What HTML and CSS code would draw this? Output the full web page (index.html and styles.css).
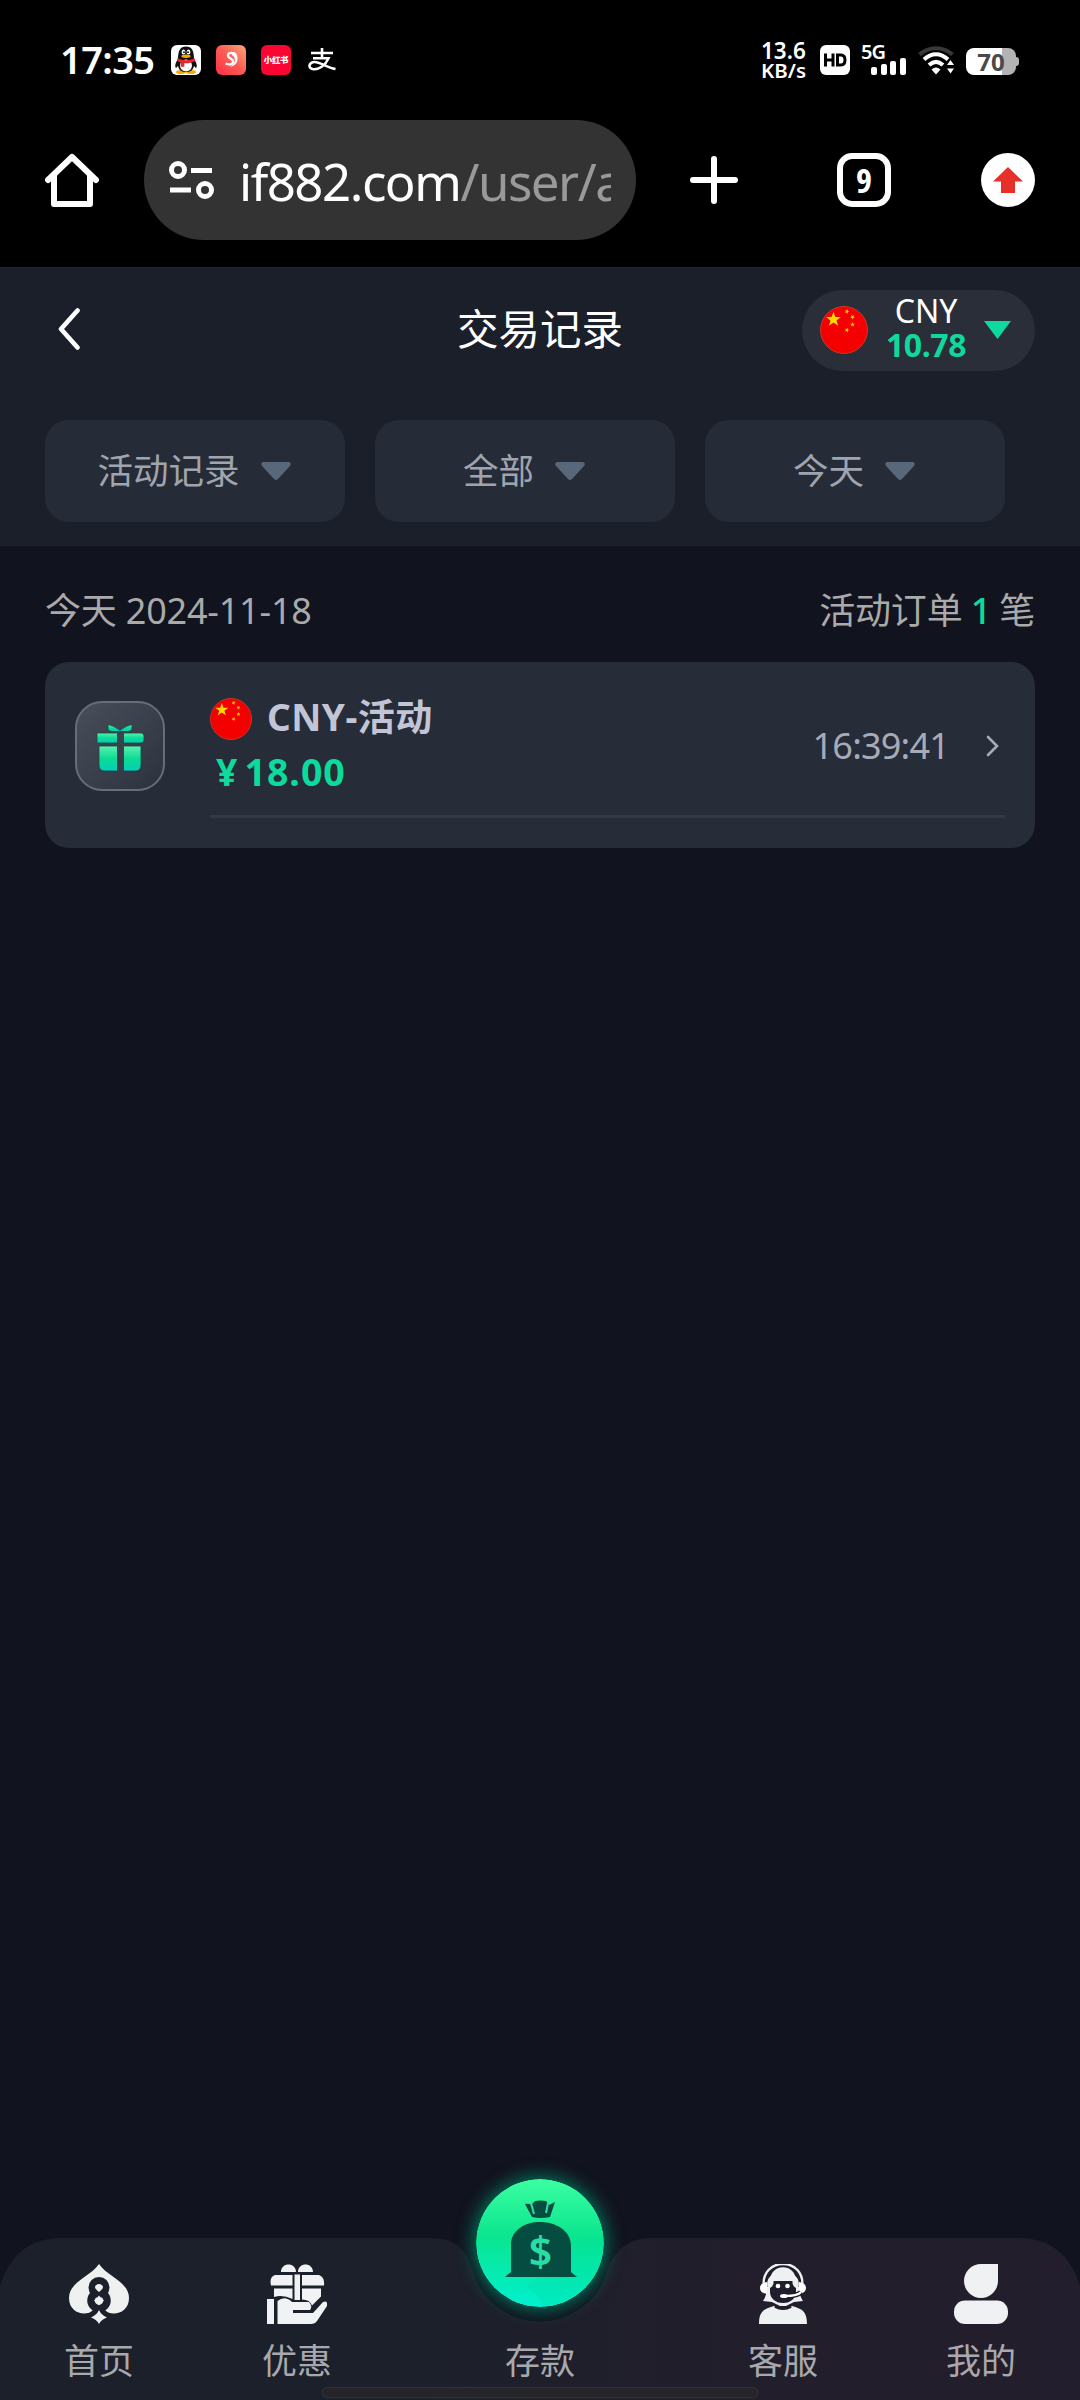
FILE: index.html
```html
<!DOCTYPE html>
<html lang="zh-CN">
<head>
<meta charset="utf-8">
<title>交易记录</title>
<link rel="stylesheet" href="styles.css">
</head>
<body>
<svg class="defs" width="0" height="0" aria-hidden="true">
  <defs>
    <linearGradient id="mint" x1="0" y1="0" x2="0" y2="1"><stop offset="0" stop-color="#3bffa0"/><stop offset=".45" stop-color="#0ae58f"/><stop offset="1" stop-color="#00f0d0"/></linearGradient>
    <linearGradient id="gift" x1="0" y1="0" x2="0" y2="1"><stop offset="0" stop-color="#5cf0b0"/><stop offset=".5" stop-color="#0bdc95"/><stop offset="1" stop-color="#04cdb8"/></linearGradient>
    <linearGradient id="tile" x1="0" y1="0" x2="1" y2="1"><stop offset="0" stop-color="#494e5b"/><stop offset="1" stop-color="#2b313d"/></linearGradient>
    <linearGradient id="coral" x1="0" y1="1" x2="1" y2="0"><stop offset="0" stop-color="#ff2f45"/><stop offset=".5" stop-color="#fb5a54"/><stop offset="1" stop-color="#ffa67a"/></linearGradient>
    <linearGradient id="bar" x1="0" y1="0" x2="1" y2="0"><stop offset="0" stop-color="#1b202a"/><stop offset=".4" stop-color="#1c202a"/><stop offset=".68" stop-color="#221e2c"/><stop offset="1" stop-color="#221e2d"/></linearGradient>
    <polygon id="star" points="0,-10 2.4,-3.2 9.5,-3.1 3.8,1.2 5.9,8.1 0,4 -5.9,8.1 -3.8,1.2 -9.5,-3.1 -2.4,-3.2"/>
    <symbol id="flag" viewBox="0 0 48 48">
      <circle cx="24" cy="24" r="23.5" fill="#f40000" stroke="#c8382c" stroke-width="1"/>
      <g fill="#ffd800">
        <use href="#star" transform="translate(13.5 13.5) scale(.78)"/>
        <use href="#star" transform="translate(27 5.5) rotate(20) scale(.25)"/>
        <use href="#star" transform="translate(32.5 11) rotate(40) scale(.25)"/>
        <use href="#star" transform="translate(32.5 18.5) scale(.25)"/>
        <use href="#star" transform="translate(27 24) rotate(20) scale(.25)"/>
      </g>
    </symbol>
  </defs>
</svg>

<header class="status">
  <span class="clock">17:35</span>
  <div class="notices">
    <svg width="30" height="30" viewBox="0 0 30 30">
      <rect width="30" height="30" rx="6" fill="#fff"/>
      <ellipse cx="10" cy="27" rx="5" ry="2" fill="#f8a900"/><ellipse cx="20" cy="27" rx="5" ry="2" fill="#f8a900"/>
      <path d="M7 14C7 6 9 1.5 15 1.5S23 6 23 14c2 3 3.500 6 2.500 8.500-.6 1-1.500-.5-2.500-1.500C22 25.500 19 27 15 27s-7-1.500-8-6c-1 1-1.900 2.500-2.500 1.500C3.500 20 5 17 7 14Z" fill="#111"/>
      <ellipse cx="15" cy="20.500" rx="6" ry="6" fill="#fff"/>
      <path d="M6.500 13c5 3 12 3 17 0l.8 3c-4 2-7 2.500-11 2.300v3.500h-3.500v-4.200l-3.800-1.600Z" fill="#e8262b"/>
      <ellipse cx="12.500" cy="7" rx="1.900" ry="2.600" fill="#fff"/><ellipse cx="17.500" cy="7" rx="1.900" ry="2.600" fill="#fff"/>
      <circle cx="13" cy="7.200" r=".9"/><circle cx="17" cy="7.200" r=".9"/>
      <ellipse cx="15" cy="11.300" rx="4.600" ry="1.700" fill="#f8a900"/>
    </svg>
    <svg width="30" height="30" viewBox="0 0 30 30">
      <rect width="30" height="30" rx="6" fill="url(#coral)"/>
      <path d="M18.500 9.500c-2.500-3-7-1.500-6.500 1.500.4 2.700 5.500 2.700 5 6-.5 2.800-4.500 3-7.500 1.500" fill="none" stroke="#fff" stroke-width="2.200"/>
      <path d="M16 7.200c3-.8 5.200 1.800 5.500 5.300.4 5-2 8.500-8 9.500 4-2 6.200-5 5-9-.6-1.800-2-2.600-2.800-3Z" fill="#fff"/>
    </svg>
    <span class="xhs">小红书</span>
    <svg class="alipay" width="28" height="24" viewBox="0 0 28 24" fill="none" stroke="#fff" stroke-width="2.600">
      <path d="M3 5h22M14 0v10M5 10.300h15.500C17 18 11 21.500 5.500 21.200-.5 20.500.8 14.500 6 14c6-.5 12 5.500 21.500 7"/>
    </svg>
  </div>
  <div class="signals">
    <div class="speed"><span>13.6</span><span class="unit">KB/s</span></div>
    <svg class="hd" width="30" height="30" viewBox="0 0 30 30">
      <rect width="30" height="30" rx="6" fill="#fff"/>
      <path d="M5.500 8.500v13M13 8.500v13M5.500 15H13M17.500 10h3.500q4 0 4 5t-4 5h-3.500Z" fill="none" stroke="#000" stroke-width="3"/>
    </svg>
    <div class="cell"><span>5G</span>
      <svg width="36" height="17" viewBox="0 0 36 17" fill="#fff"><rect y="9" width="6" height="8" rx="2"/><rect x="10" y="6" width="6" height="11" rx="2"/><rect x="19" y="3" width="6" height="14" rx="2"/><rect x="29" width="6" height="17" rx="2"/></svg>
    </div>
    <svg class="wifi" width="38" height="30" viewBox="0 0 38 30" fill="none" stroke-width="4">
      <path d="M1.500 9.500C11 1 25 1 34.500 9.500" stroke="#383838"/>
      <path d="M6 14.500c7.500-7 16.500-7 24 0M11 20c4.500-4 9.500-4 14 0" stroke="#fff"/>
      <path d="M13.500 24.500q4.500-4 9 0L18 29.500ZM32.500 15l3.500 5h-7ZM32.500 28.500l3.500-5h-7Z" fill="#fff"/>
    </svg>
    <div class="battery"><span>70</span></div>
  </div>
</header>

<nav class="browser">
  <svg class="home" width="54" height="54" viewBox="0 0 54 54" fill="none" stroke="#fff" stroke-width="6" stroke-linejoin="round" stroke-linecap="round">
    <path d="M3 27 27 4l24 23M9 23v28h36V23"/>
  </svg>
  <div class="address">
    <svg width="46" height="38" viewBox="0 0 46 38" fill="none" stroke="#fff" stroke-width="5">
      <circle cx="9" cy="9" r="6.500"/><circle cx="36" cy="29" r="6.500"/><path d="M22 9.500h21M1 29h21"/>
    </svg>
    <div class="url">if882.com<span>/user/a</span></div>
  </div>
  <svg class="plus" width="48" height="48" viewBox="0 0 48 48" stroke="#fff" stroke-width="6" stroke-linecap="round"><path d="M24 3v42M3 24h42"/></svg>
  <span class="tabs">9</span>
  <svg class="update" width="54" height="54" viewBox="0 0 54 54"><circle cx="27" cy="27" r="27" fill="#fff"/><path d="M27 14 42 28.500h-8V40H20V28.500h-8Z" fill="#e8302a"/></svg>
</nav>

<section class="top">
  <div class="titlebar">
    <svg class="back" width="22" height="42" viewBox="0 0 22 42" fill="none" stroke="#fff" stroke-width="4.600" stroke-linecap="round" stroke-linejoin="round"><path d="M19.500 2.500 3 21l16.500 18.500"/></svg>
    <h1>交易记录</h1>
    <div class="wallet">
      <svg width="48" height="48"><use href="#flag"/></svg>
      <div class="balance"><span>CNY</span><b>10.78</b></div>
      <svg width="27" height="18" viewBox="0 0 27 18"><path d="M0 0h27L13.500 18Z" fill="#0fda9e"/></svg>
    </div>
  </div>
  <div class="filters">
    <button><span>活动记录</span><svg width="30" height="18" viewBox="0 0 30 18"><path d="M2 0h26q3 1 1 4L17 17q-2 2-4 0L1 4Q-1 1 2 0Z"/></svg></button>
    <button><span>全部</span><svg width="30" height="18" viewBox="0 0 30 18"><path d="M2 0h26q3 1 1 4L17 17q-2 2-4 0L1 4Q-1 1 2 0Z"/></svg></button>
    <button><span>今天</span><svg width="30" height="18" viewBox="0 0 30 18"><path d="M2 0h26q3 1 1 4L17 17q-2 2-4 0L1 4Q-1 1 2 0Z"/></svg></button>
  </div>
</section>

<main>
  <div class="summary"><span>今天 2024-11-18</span><span>活动订单 <em>1</em> 笔</span></div>
  <article class="record">
    <svg class="gift" width="90" height="90" viewBox="0 0 90 90">
      <rect x="1" y="1" width="88" height="88" rx="26" fill="url(#tile)" stroke="#676d79" stroke-width="2"/>
      <g fill="url(#gift)" stroke="#20433f" stroke-width=".8">
        <path d="M33 23.500q6 1 11.500 5.500h1Q51 24.500 57 23.500v4q0 3-4 3H37q-4 0-4-3Z"/>
        <path d="M22 32h20.500v10H22Z"/><path d="M48.500 32H66q3 0 3 3v4q0 3-3 3H48.500Z"/>
        <path d="M24 45h18.500v25H30q-6 0-6-6Z"/><path d="M48.500 45H66v19q0 6-6 6H48.500Z"/>
      </g>
    </svg>
    <div class="detail">
      <div class="info">
        <div class="name"><svg width="42" height="42"><use href="#flag"/></svg><b>CNY-活动</b></div>
        <b class="amount"><span>¥</span>18.00</b>
      </div>
      <time>16:39:41</time>
      <svg class="go" width="13" height="22" viewBox="0 0 13 22" fill="none" stroke="#a8abb7" stroke-width="2.600" stroke-linecap="round"><path d="M2 2l9 9-9 9"/></svg>
    </div>
  </article>
</main>

<footer>
  <svg class="shape" width="1080" height="162" viewBox="0 0 1080 162"><path d="M0 48Q14 2 58 0H428C462 0 468 17 474 37A70 70 0 0 0 606 37C612 17 624 0 652 0H1022Q1066 2 1080 48V162H0Z" fill="url(#bar)"/></svg>
  <div class="items">
    <a>
      <svg width="60" height="60" viewBox="0 0 60 60">
        <path d="M30 0C39 13 60 18 60 34 60 50 42 53 36 46l-6-3-6 3C18 53 0 50 0 34 0 18 21 13 30 0Z" fill="#eef1f0"/>
        <path d="M24 48 30 42l6 6v3H24Z" fill="#1b202a"/>
        <circle cx="30" cy="23.500" r="7" fill="none" stroke="#1b202a" stroke-width="7"/><circle cx="30" cy="36.500" r="8" fill="none" stroke="#1b202a" stroke-width="7.500"/>
        <path d="M30 28c-7-5-3-9 0-5.500 3-3.500 7 .5 0 5.500ZM30 31.500q2 3 5 5-3 2-5 5-2-3-5-5 3-2 5-5ZM30 46q2 5 8 7.500-6 2-8 6.500-2-4.500-8-6.500 6-2.500 8-7.500Z" fill="#eef1f0"/>
      </svg>首页</a>
    <a>
      <svg width="60" height="60" viewBox="0 0 60 60" fill="#f0f2f3">
        <path d="M14 8C14-2 29-2 29 8ZM31 8C31-2 46-2 46 8ZM8 11h17.500v10.500H4Q2 13 8 11ZM35 11h17q6 2 5 10.500H35ZM27.500 10.500h5.500V36h-5.500ZM7 24.500h18.500V35q-10-5-18.500-2ZM35 24.500h19v8l-9 9q-2-6-10-6Z"/>
        <path d="M0 35h7v25H0Z"/>
        <path d="M10.500 37Q18 31 25 38h17q4 4 1 8H26v3h20L56 38q5-2 4 4L50 57q-2 3-6 3H10.500Z"/>
      </svg>优惠</a>
    <a class="deposit">
      <svg width="128" height="128" viewBox="0 0 128 128">
        <circle cx="64" cy="64" r="64" fill="url(#mint)"/>
        <path d="M95 62Q110 57 127 58A64 64 0 0 1 68 128Q64 117 50 107 75 90 95 62Z" fill="#00d99a" opacity=".22"/>
        <path d="M49 25q4-1 6 1l4-4q6-1 11 0l3 4 6-3-5 15q-10 2-18 0ZM29 98l6-5V66C35 51 49 43 64 43s31 8 31 24v26l6 5Z" fill="#054d41"/>
        <path d="M55 24l3 11M72 24l-2 10" stroke="#33dca0" stroke-width="2"/>
        <text x="64.500" y="88" text-anchor="middle">$</text>
      </svg>存款</a>
    <a>
      <svg width="60" height="60" viewBox="0 0 60 60">
        <path d="M10 37Q14 32 14 20C14 4 46 4 46 20q0 12 4 17l-9 1-8 4h-6l-8-4Z" fill="#eef1f2"/>
        <path d="M17 17h26v11c0 6-5 11-13 11s-13-5-13-11Z" fill="#211e2c"/>
        <path d="M17 24v-8C18-1 42-1 43 16v8q-4-2-3.500-7-10-1-19 0 .5 5-3.500 7Z" fill="#eef1f2"/>
        <path d="M13 23C8-6 52-6 47 23" fill="none" stroke="#211e2c" stroke-width="3"/>
        <path d="M11 24C6-8 54-8 49 24" fill="none" stroke="#eef1f2" stroke-width="2.400"/>
        <path d="M14 18v12Q7 29 7 24t7-6ZM46 18v12q7-1 7-6t-7-6Z" fill="#fff"/>
        <path d="M48 28q-3 4-16 4" fill="none" stroke="#211e2c" stroke-width="5"/>
        <path d="M48 28q-3 4-16 4" fill="none" stroke="#fff" stroke-width="2.200"/><ellipse cx="31" cy="32" rx="4" ry="2" fill="#fff"/>
        <circle cx="25" cy="22" r="2.300" fill="#fff"/><circle cx="34.500" cy="22" r="2.300" fill="#fff"/>
        <path d="M6 60C6 47 11 45 21 42q9 7 18 0c10 3 15 5 15 18Z" fill="#eef1f2"/>
        <path d="M22 42.500q8 4 16 0" fill="none" stroke="#211e2c" stroke-width="3"/>
      </svg>客服</a>
    <a>
      <svg width="60" height="60" viewBox="0 0 60 60" fill="#f0f1f3"><path d="M30 0h17v17A17 17 0 1 1 30 0Z"/><rect x="3" y="36.500" width="54" height="23.500" rx="11"/></svg>我的</a>
  </div>
  <i class="gesture"></i>
</footer>
</body>
</html>
```
FILE: styles.css
```css
* { box-sizing: border-box; }
body {
  margin: 0;
  width: 1080px;
  height: 2400px;
  overflow: hidden;
  display: flex;
  flex-direction: column;
  background: #11131e;
  color: #fff;
  font-family: "Noto Sans", "Noto Sans CJK SC", sans-serif;
}
svg { display: block; flex: none; }
.defs { position: absolute; }

.status {
  height: 120px;
  padding: 0 60px;
  display: flex;
  align-items: center;
  background: #000;
}
.clock { width: 111px; padding-bottom: 3px; font-size: 38px; font-weight: 600; line-height: 1; letter-spacing: -.6px; }
.notices { display: flex; align-items: center; gap: 15px; }
.xhs {
  width: 30px; height: 30px; border-radius: 6px; background: #fb0533;
  font: 900 8.500px/29px "Noto Sans CJK SC", sans-serif; text-align: center; letter-spacing: -.3px; white-space: nowrap;
}
.alipay { margin-left: 2px; }
.signals { margin-left: auto; display: flex; align-items: center; }
.speed { width: 59px; display: flex; flex-direction: column; font-size: 22.500px; font-weight: 600; line-height: 19px; white-space: nowrap; }
.speed .unit { font-size: 20.500px; line-height: 20px; }
.hd { margin-right: 11px; }
.cell { width: 57px; height: 30px; display: flex; flex-direction: column; }
.cell span { height: 13px; font-size: 20px; font-weight: 600; line-height: 13px; letter-spacing: -1px; }
.cell svg { margin-left: 10px; }
.wifi { margin-right: 10px; }
.battery {
  position: relative; width: 50px; height: 27px; margin: 2px 4px 0 0; border-radius: 8px;
  background: linear-gradient(90deg, #fff 36px, #b3b3b3 36px);
  color: #4a4a4a; font-size: 24px; font-weight: 700; line-height: 27px; text-align: center;
}
.battery::after { content: ""; position: absolute; right: -3px; top: 9px; width: 3px; height: 9px; border-radius: 0 3px 3px 0; background: #b3b3b3; }

.browser { height: 147px; padding: 0 45px 27px; display: flex; align-items: center; background: #000; }
.address {
  width: 492px; height: 120px; margin-left: 45px; padding: 0 24px 0 25px;
  display: flex; align-items: center; gap: 24px; border-radius: 60px; background: #333;
}
.url { width: 372px; overflow: hidden; white-space: nowrap; font-size: 51px; line-height: 80px; padding-top: 2px; letter-spacing: -1.500px; }
.url span { color: #999; }
.plus { margin-left: 54px; }
.tabs {
  width: 54px; height: 54px; margin-left: 99px; border: 6px solid #fff; border-radius: 15px;
  font: 700 34px/42px "Open Sans", sans-serif; font-stretch: condensed; text-align: center;
}
.update { margin-left: 90px; }

.top { height: 279px; background: #1b1f2a; border-top: 2px solid #20232e; display: flex; flex-direction: column; }
.titlebar { height: 151px; padding: 21px 45px 0 58px; display: grid; grid-template-columns: 233px 1fr 233px; align-items: start; }
.back { margin-top: 18px; }
h1 { margin: 0 0 0 -13px; font-size: 41.500px; font-weight: 400; line-height: 78px; text-align: center; }
.wallet { height: 81px; padding: 0 24px 1px 18px; display: flex; align-items: center; justify-content: space-between; border-radius: 41px; background: #2a2e39; }
.balance { padding-bottom: 4px; display: flex; flex-direction: column; align-items: center; line-height: 34px; font-size: 32px; }
.balance b { color: #0fda9e; letter-spacing: -.4px; }
.filters { padding: 0 45px; display: flex; gap: 30px; }
.filters button {
  width: 300px; height: 102px; padding: 0 2px 0 0; border: 0; border-radius: 24px; background: #262c37; color: #a0a4ae;
  font: 400 35.500px "Noto Sans", "Noto Sans CJK SC", sans-serif;
  display: flex; align-items: center; justify-content: center; gap: 21px;
}
.filters span { padding-bottom: 6px; }
.filters svg { fill: #59677b; }

main { padding: 0 45px; }
.summary { height: 116px; padding-top: 9px; display: flex; justify-content: space-between; align-items: center; font-size: 36px; letter-spacing: -.2px; color: #aaa; }
.summary em { color: #0bdb9c; font-style: normal; font-weight: 500; margin: 0 -1px; }
.record { height: 186px; padding: 39px 30px 0; display: flex; gap: 45px; align-items: start; border-radius: 24px; background: #262c38; }
.detail { flex: 1; height: 117px; display: flex; border-bottom: 3px solid #333a45; }
.info { flex: 1; margin-top: -6px; }
.name { height: 48px; display: flex; align-items: center; gap: 15px; font-size: 37px; letter-spacing: .5px; color: #c2c5d5; }
.name b { line-height: 48px; padding-bottom: 5px; }
.amount { display: flex; padding-left: 6px; gap: 6px; font-size: 37.500px; line-height: 58px; letter-spacing: 1px; color: #0bdb9c; }
time { font-size: 36px; line-height: 90px; letter-spacing: -.8px; color: #a8abb7; }
.go { margin: 34px 6px 0 37px; }

footer { position: relative; margin-top: auto; height: 162px; }
.shape { position: absolute; inset: 0; }
.items { position: relative; height: 162px; display: grid; grid-template-columns: 198px 198px 288px 198px 198px; }
.items a { display: flex; flex-direction: column; align-items: center; padding-top: 26px; gap: 11px; font-size: 35px; line-height: 52px; color: #a9a9ad; }
.items .deposit { padding-top: 0; margin-top: -59px; gap: 28px; }
.deposit svg { border-radius: 50%; box-shadow: 0 0 18px 2px #007e62; }
.deposit text { font: 600 41px "Noto Sans", sans-serif; fill: #27dfa5; }
.gesture { position: absolute; left: 323px; bottom: 3px; width: 434px; height: 9px; border-radius: 5px; background: #242429; box-shadow: 0 0 1px 1px #33343c; }
```
